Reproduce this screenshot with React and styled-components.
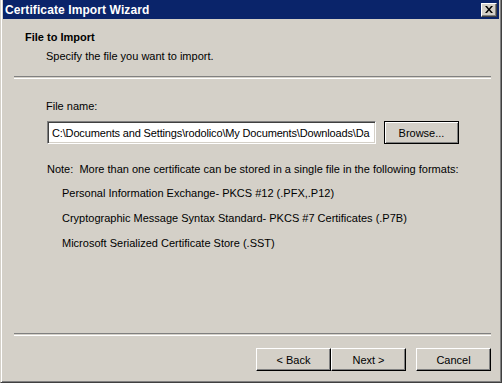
import React from 'react';
import styled, { createGlobalStyle } from 'styled-components';

const GlobalStyle = createGlobalStyle`
  html, body {
    margin: 0;
    padding: 0;
    background: #d4d0c8;
  }
  body {
    font-family: 'Liberation Sans', Arial, sans-serif;
    font-size: 11px;
    color: #000;
  }
`;

const Window = styled.div`
  width: 502px;
  height: 383px;
  box-sizing: border-box;
  background: #d4d0c8;
  border-left: 1px solid #d4d0c8;
  border-right: 1px solid #404040;
  border-bottom: 1px solid #404040;
  box-shadow: inset 1px 0 0 #ffffff, inset -1px 0 0 #808080, inset 0 -1px 0 #808080;
  padding: 0 1px 1px 2px;
  display: flex;
  flex-direction: column;
`;

const TitleBar = styled.div`
  height: 19px;
  flex-shrink: 0;
  margin-right: 1px;
  background: #0a246a;
  display: flex;
  align-items: center;
  justify-content: space-between;
  padding: 0 2px 0 2px;
`;

const Title = styled.span`
  color: #fff;
  font-weight: bold;
  font-size: 12px;
  letter-spacing: 0.1px;
`;

const CloseButton = styled.div`
  width: 16px;
  height: 14px;
  box-sizing: border-box;
  background: #d4d0c8;
  border-top: 1px solid #fff;
  border-left: 1px solid #fff;
  border-right: 1px solid #404040;
  border-bottom: 1px solid #404040;
  box-shadow: inset -1px -1px 0 #808080;
  display: flex;
  align-items: center;
  justify-content: center;
`;

const Header = styled.div`
  padding: 12px 0 0 22px;
  height: 45px;
  flex-shrink: 0;
`;

const HeaderTitle = styled.div`
  font-weight: bold;
  font-size: 11px;
  line-height: 13px;
`;

const HeaderText = styled.div`
  margin-top: 6px;
  padding-left: 21px;
  line-height: 13px;
`;

const Separator = styled.div`
  margin: 0 9px 0 11px;
  height: 1px;
  flex-shrink: 0;
  border-top: 1px solid #808080;
  border-bottom: 1px solid #ffffff;
`;

const Body = styled.div`
  flex: 1;
  padding: 21px 0 0 43px;
`;

const Label = styled.div`
  line-height: 13px;
`;

const FileRow = styled.div`
  display: flex;
  align-items: center;
  gap: 8px;
  margin-top: 8px;
  margin-left: 1px;
`;

const FileInput = styled.div`
  width: 329px;
  height: 23px;
  box-sizing: border-box;
  background: #fff;
  border-top: 1px solid #808080;
  border-left: 1px solid #808080;
  border-right: 1px solid #fff;
  border-bottom: 1px solid #fff;
  box-shadow: inset 1px 1px 0 #404040, inset -1px -1px 0 #d4d0c8;
  padding: 0 3px 0 4px;
  display: flex;
  align-items: center;
  overflow: hidden;
  white-space: nowrap;
  letter-spacing: -0.15px;
`;

const Button = styled.div`
  width: ${p => p.$width || 75}px;
  height: 23px;
  box-sizing: border-box;
  background: #d4d0c8;
  display: flex;
  align-items: center;
  justify-content: center;
  border-top: 1px solid ${p => (p.$default ? '#000' : '#fff')};
  border-left: 1px solid ${p => (p.$default ? '#000' : '#fff')};
  border-right: 1px solid #000;
  border-bottom: 1px solid #000;
  box-shadow: ${p =>
    p.$default
      ? 'inset 1px 1px 0 #fff, inset -1px -1px 0 #808080'
      : 'inset -1px -1px 0 #808080'};
`;

const Note = styled.div`
  margin-top: 19px;
  line-height: 13px;
  margin-left: 1px;
`;

const FormatList = styled.div`
  display: flex;
  flex-direction: column;
  gap: 12px;
  margin-top: 11px;
  padding-left: 16px;
  line-height: 13px;
`;

const Footer = styled.div`
  height: 45px;
  flex-shrink: 0;
  display: flex;
  justify-content: flex-end;
  align-items: flex-start;
  padding: 12px 9px 0 0;
  box-sizing: border-box;
`;

const Gap = styled.div`
  width: 10px;
`;

export default function App() {
  return (
    <>
      <GlobalStyle />
      <Window>
        <TitleBar>
          <Title>Certificate Import Wizard</Title>
          <CloseButton>
            <svg width="8" height="7" viewBox="0 0 8 7">
              <path d="M0 0h2l2 2.5L6 0h2L5 3.5 8 7H6L4 4.5 2 7H0l3-3.5z" fill="#000" />
            </svg>
          </CloseButton>
        </TitleBar>
        <Header>
          <HeaderTitle>File to Import</HeaderTitle>
          <HeaderText>Specify the file you want to import.</HeaderText>
        </Header>
        <Separator />
        <Body>
          <Label>File name:</Label>
          <FileRow>
            <FileInput>C:\Documents and Settings\rodolico\My Documents\Downloads\Da</FileInput>
            <Button $default>Browse...</Button>
          </FileRow>
          <Note>Note:&nbsp; More than one certificate can be stored in a single file in the following formats:</Note>
          <FormatList>
            <div>Personal Information Exchange- PKCS #12 (.PFX,.P12)</div>
            <div>Cryptographic Message Syntax Standard- PKCS #7 Certificates (.P7B)</div>
            <div>Microsoft Serialized Certificate Store (.SST)</div>
          </FormatList>
        </Body>
        <Separator />
        <Footer>
          <Button>&lt; Back</Button>
          <Button>Next &gt;</Button>
          <Gap />
          <Button>Cancel</Button>
        </Footer>
      </Window>
    </>
  );
}
